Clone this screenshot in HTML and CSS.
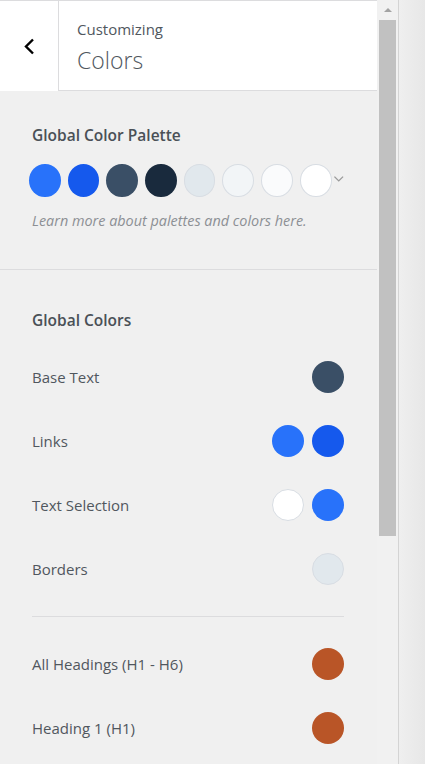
FILE: index.html
```html
<!DOCTYPE html>
<html lang="en">
<head>
  <meta charset="UTF-8" />
  <title>Customizing Colors</title>
  <link rel="stylesheet" href="styles.css">
</head>
<body>
  <div class="sidebar">
    <div class="panel">
      <div class="section-title">
        <button class="back" aria-label="Back">
          <svg width="13" height="17" viewBox="0 0 13 17"><polyline points="10,1.5 3,8.5 10,15.5" fill="none" stroke="#000" stroke-width="2.4"/></svg>
        </button>
        <div class="title-box">
          <span class="crumb">Customizing</span>
          <h2>Colors</h2>
        </div>
      </div>

      <!-- palette -->
      <div class="section palette-section">
        <h3>Global Color Palette</h3>
        <div class="palette">
          <span class="swatch" style="background:#2872fa"></span>
          <span class="swatch" style="background:#1559ed"></span>
          <span class="swatch" style="background:#3a4f66"></span>
          <span class="swatch" style="background:#192a3d"></span>
          <span class="swatch light" style="background:#e1e8ed"></span>
          <span class="swatch light" style="background:#f2f5f7"></span>
          <span class="swatch light" style="background:#fafbfc"></span>
          <span class="swatch light" style="background:#ffffff"></span>
          <svg class="more" width="12" height="8" viewBox="0 0 12 8"><polyline points="1.5,1.5 6,6 10.5,1.5" fill="none" stroke="#9a9a9a" stroke-width="1.4"/></svg>
        </div>
        <p class="hint">Learn more about palettes and colors here.</p>
      </div>

      <!-- global colors -->
      <div class="section colors-section">
        <h3>Global Colors</h3>
        <div class="row">
          <span class="label">Base Text</span>
          <div class="dots"><span class="dot" style="background:#3a4f66"></span></div>
        </div>
        <div class="row">
          <span class="label">Links</span>
          <div class="dots">
            <span class="dot" style="background:#2872fa"></span>
            <span class="dot" style="background:#1559ed"></span>
          </div>
        </div>
        <div class="row">
          <span class="label">Text Selection</span>
          <div class="dots">
            <span class="dot light" style="background:#ffffff"></span>
            <span class="dot" style="background:#2872fa"></span>
          </div>
        </div>
        <div class="row">
          <span class="label">Borders</span>
          <div class="dots"><span class="dot light" style="background:#e1e8ed"></span></div>
        </div>
        <hr class="divider">
        <div class="row">
          <span class="label">All Headings (H1 - H6)</span>
          <div class="dots"><span class="dot" style="background:#b95527"></span></div>
        </div>
        <div class="row">
          <span class="label">Heading 1 (H1)</span>
          <div class="dots"><span class="dot" style="background:#b95527"></span></div>
        </div>
      </div>
    </div>

    <div class="scrollbar">
      <span class="arrow"></span>
      <span class="thumb"></span>
    </div>
  </div>
  <div class="preview"></div>
</body>
</html>
```

FILE: styles.css
```css
html, body {
  margin: 0;
  padding: 0;
  height: 100%;
  overflow: hidden;
}

body {
  display: flex;
  font-family: "Open Sans", "Noto Sans", sans-serif;
  background: #f0f0f0;
}

.sidebar {
  display: flex;
  width: 398px;
  height: 100%;
  border-right: 1px solid #d4d4d4;
  flex-shrink: 0;
}

.panel {
  width: 377px;
  background: #f0f0f0;
  overflow: hidden;
}

.section-title {
  display: flex;
  height: 91px;
  border-top: 1px solid #dcdcde;
  box-sizing: border-box;
}

.back {
  width: 58px;
  border: none;
  background: #fff;
  padding: 0;
  display: flex;
  align-items: center;
  justify-content: center;
}

.title-box {
  flex: 1;
  background: #fff;
  border-left: 1px solid #dcdcde;
  border-bottom: 1px solid #dcdcde;
  padding: 17px 0 0 18px;
}

.crumb {
  display: block;
  font-size: 15px;
  line-height: 22px;
  color: #50575e;
}

.title-box h2 {
  margin: 5px 0 0;
  font-size: 23px;
  font-weight: 300;
  line-height: 30px;
  color: #50575e;
}

.section {
  padding: 0 33px 0 32px;
}

.section h3 {
  margin: 0;
  font-size: 15.5px;
  font-weight: 600;
  line-height: 20px;
  color: #4a5057;
}

.palette-section {
  padding-top: 34px;
  padding-bottom: 38px;
  border-bottom: 1px solid #dcdcde;
}

.palette {
  display: flex;
  align-items: center;
  gap: 7px;
  margin: 19px 0 0 -3px;
}

.swatch {
  width: 33px;
  height: 33px;
  border-radius: 50%;
  box-sizing: border-box;
}

.swatch.light,
.dot.light {
  border: 1px solid #d8dde3;
}

.more {
  margin-left: -6px;
  margin-top: -4px;
}

.hint {
  margin: 14px 0 0;
  font-size: 14.4px;
  font-style: italic;
  line-height: 20px;
  color: #8c8f94;
}

.colors-section {
  padding-top: 40px;
}

.colors-section h3 {
  margin-bottom: 15px;
}

.row {
  display: flex;
  align-items: center;
  justify-content: space-between;
  height: 64px;
}

.label {
  font-size: 15px;
  color: #50575e;
}

.dots {
  display: flex;
  gap: 8px;
}

.dot {
  width: 32px;
  height: 32px;
  border-radius: 50%;
  box-sizing: border-box;
}

.divider {
  border: none;
  border-top: 1px solid #dcdcde;
  margin: 15px 0;
}

.scrollbar {
  width: 21px;
  background: #f1f1f1;
  display: flex;
  flex-direction: column;
  align-items: center;
}

.arrow {
  margin-top: 8px;
  width: 0;
  height: 0;
  border-left: 4px solid transparent;
  border-right: 4px solid transparent;
  border-bottom: 4px solid #a3a3a3;
}

.thumb {
  margin-top: 8px;
  width: 17px;
  height: 516px;
  background: #c1c1c1;
}

.preview {
  flex: 1;
  background: linear-gradient(to right, #efefef, #e7e7e7);
}
```
